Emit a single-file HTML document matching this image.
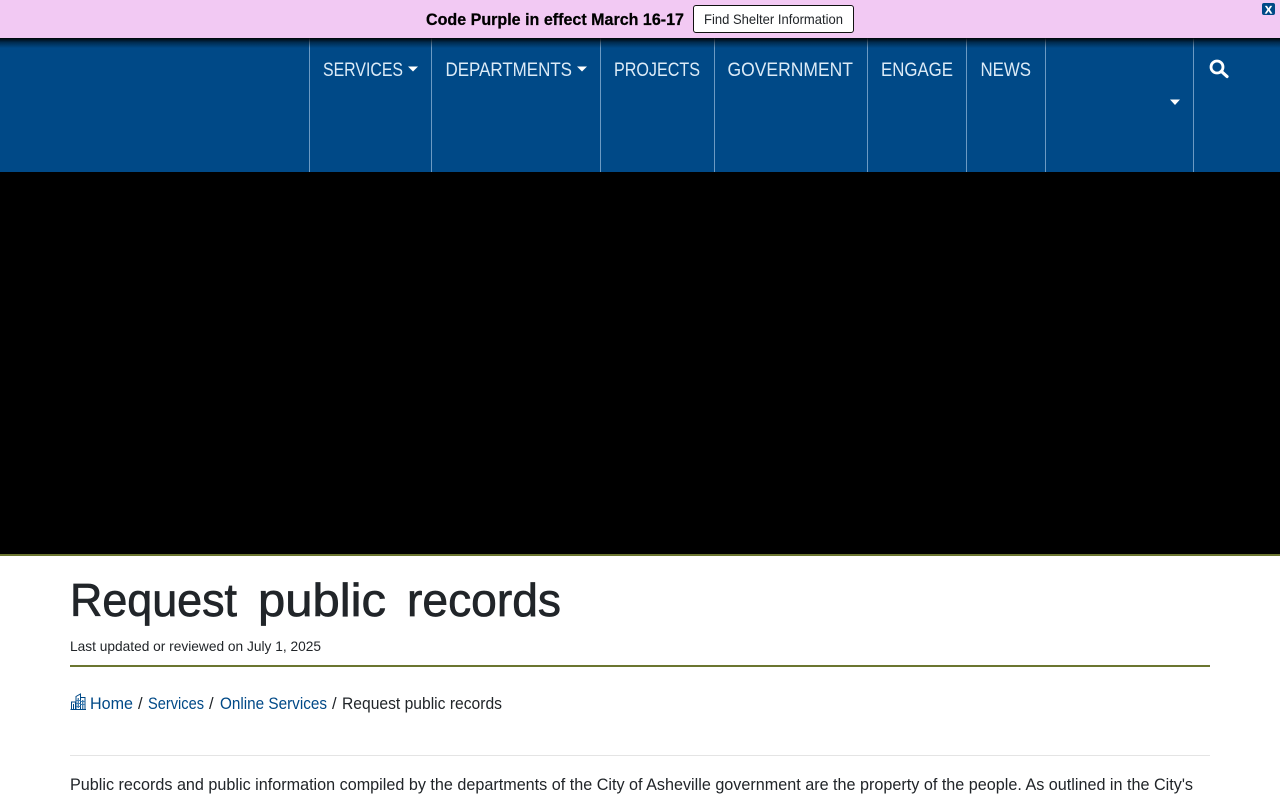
<!DOCTYPE html>
<html lang="en">
<head>
<meta charset="utf-8">
<title>Request public records</title>
<style>
html,body{margin:0;padding:0;background:#fff;width:1280px;height:800px;overflow:hidden}
svg{display:block;position:absolute;left:0;top:0}
text{font-family:"Liberation Sans","DejaVu Sans",sans-serif}
.nav{fill:#dcebf7;font-size:19px}
.link{fill:#004987;font-size:16.5px}
.dark{fill:#212529;font-size:16.5px}
.h{fill:#212529;stroke:#212529;stroke-width:.7px;font-size:46px}
</style>
</head>
<body>
<svg width="1280" height="800" viewBox="0 0 1280 800" xmlns="http://www.w3.org/2000/svg">
<defs>
<linearGradient id="sh" x1="0" y1="0" x2="0" y2="1">
<stop offset="0" stop-color="#000" stop-opacity=".95"/>
<stop offset=".45" stop-color="#000" stop-opacity=".4"/>
<stop offset="1" stop-color="#000" stop-opacity="0"/>
</linearGradient>
</defs>
<rect width="1280" height="800" fill="#fff"/>
<!-- nav -->
<rect y="38" width="1280" height="134" fill="#004987"/>
<g fill="#6c9ac3">
<rect x="309" y="38" width="1" height="134"/>
<rect x="431" y="38" width="1" height="134"/>
<rect x="600" y="38" width="1" height="134"/>
<rect x="714" y="38" width="1" height="134"/>
<rect x="867" y="38" width="1" height="134"/>
<rect x="966" y="38" width="1" height="134"/>
<rect x="1045" y="38" width="1" height="134"/>
<rect x="1193" y="38" width="1" height="134"/>
</g>
<rect y="38" width="1280" height="10" fill="url(#sh)"/>
<text class="nav" x="323" y="76" textLength="80" lengthAdjust="spacingAndGlyphs">SERVICES</text>
<path d="M408 66.500h10l-5 5z" fill="#fff"/>
<text class="nav" x="445.500" y="76" textLength="126.500" lengthAdjust="spacingAndGlyphs">DEPARTMENTS</text>
<path d="M577 66.500h10l-5 5z" fill="#fff"/>
<text class="nav" x="614" y="76" textLength="86" lengthAdjust="spacingAndGlyphs">PROJECTS</text>
<text class="nav" x="727.500" y="76" textLength="125.500" lengthAdjust="spacingAndGlyphs">GOVERNMENT</text>
<text class="nav" x="881" y="76" textLength="72" lengthAdjust="spacingAndGlyphs">ENGAGE</text>
<text class="nav" x="980.500" y="76" textLength="50.500" lengthAdjust="spacingAndGlyphs">NEWS</text>
<path d="M1170 99.500h10l-5 5.500z" fill="#fff"/>
<circle cx="1217" cy="67" r="6" fill="none" stroke="#fff" stroke-width="2.800"/>
<path d="M1221.500 71.500l5.500 5" stroke="#fff" stroke-width="3.200" stroke-linecap="round"/>
<!-- banner -->
<rect width="1280" height="38" fill="#f2c9f3"/>
<text x="426" y="25" font-size="16.500" font-weight="700" fill="#000" stroke="#000" stroke-width=".25" textLength="258" lengthAdjust="spacingAndGlyphs">Code Purple in effect March 16-17</text>
<rect x="693.500" y="5.500" width="160" height="27" rx="2.500" fill="#fff" stroke="#111"/>
<text x="704" y="24" font-size="14" fill="#212529" textLength="139" lengthAdjust="spacingAndGlyphs">Find Shelter Information</text>
<rect x="1262" y="3" width="13" height="12" rx="2" fill="#004987"/>
<text x="1268.500" y="13.300" font-size="11" font-weight="700" fill="#fff" stroke="#fff" stroke-width=".3" text-anchor="middle">X</text>
<!-- hero -->
<rect y="172" width="1280" height="382" fill="#000"/>
<rect y="554" width="1280" height="2" fill="#6b7530"/>
<!-- heading -->
<text class="h" x="70" y="616" textLength="167" lengthAdjust="spacingAndGlyphs">Request</text>
<text class="h" x="258" y="616" textLength="128" lengthAdjust="spacingAndGlyphs">public</text>
<text class="h" x="407" y="616" textLength="154" lengthAdjust="spacingAndGlyphs">records</text>
<text x="70" y="651" font-size="14" fill="#212529" textLength="251" lengthAdjust="spacingAndGlyphs">Last updated or reviewed on July 1, 2025</text>
<rect x="70" y="665" width="1140" height="2" fill="#6b7530"/>
<!-- breadcrumb -->
<g fill="none" stroke="#004987" stroke-width="1">
<path d="M70.500 709.500h15.500M71.500 709v-7h4v7M76 709v-12.500l4.500-2.500v15M80.500 697.500h4.500v11.500"/>
<path d="M78.200 698v10M82.800 700v9M73.500 704v5"/>
<path d="M76 700.500h4.500M76 703.500h4.500M76 706.500h4.500M80.500 701.500h4.500M80.500 704.500h4.500" stroke="#3f7fb5"/>
</g>
<text class="link" x="90" y="709" textLength="43" lengthAdjust="spacingAndGlyphs">Home</text>
<text class="dark" x="138" y="709">/</text>
<text class="link" x="148" y="709" textLength="56" lengthAdjust="spacingAndGlyphs">Services</text>
<text class="dark" x="209" y="709">/</text>
<text class="link" x="220" y="709" textLength="107" lengthAdjust="spacingAndGlyphs">Online Services</text>
<text class="dark" x="332" y="709">/</text>
<text class="dark" x="342" y="709" textLength="160" lengthAdjust="spacingAndGlyphs">Request public records</text>
<rect x="70" y="755" width="1140" height="1" fill="#e4e4e4"/>
<text class="dark" x="70" y="790" textLength="1123" lengthAdjust="spacingAndGlyphs">Public records and public information compiled by the departments of the City of Asheville government are the property of the people. As outlined in the City's</text>
</svg>
</body>
</html>
